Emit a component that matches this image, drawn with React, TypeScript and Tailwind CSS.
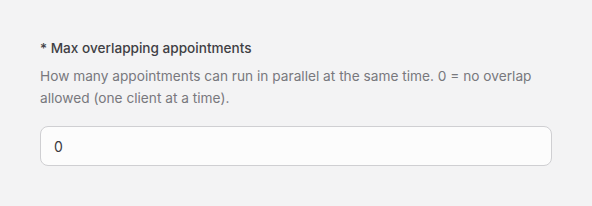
import React from "react";

export default function App() {
  return (
    <div className="w-[592px] h-[206px] bg-[#f3f3f4] px-10 pt-[38px]" style={{ fontFamily: "Inter, 'Noto Sans', sans-serif" }}>
      <label className="block text-[13.6px] leading-[20px] font-medium text-[#3f3f44]">* Max overlapping appointments</label>
      <p className="mt-[7px] text-[13.7px] leading-[22px] text-[#78787d]">
        How many appointments can run in parallel at the same time. 0 = no overlap allowed (one client at a time).
      </p>
      <input
        defaultValue="0"
        className="mt-[17px] block w-[512px] h-[40px] rounded-[8px] border border-[#cfcfd2] bg-[#fcfcfc] px-[13px] text-[14px] text-[#3a3a3f] outline-none"
        style={{ fontFamily: "Inter, 'Noto Sans', sans-serif" }}
      />
    </div>
  );
}
